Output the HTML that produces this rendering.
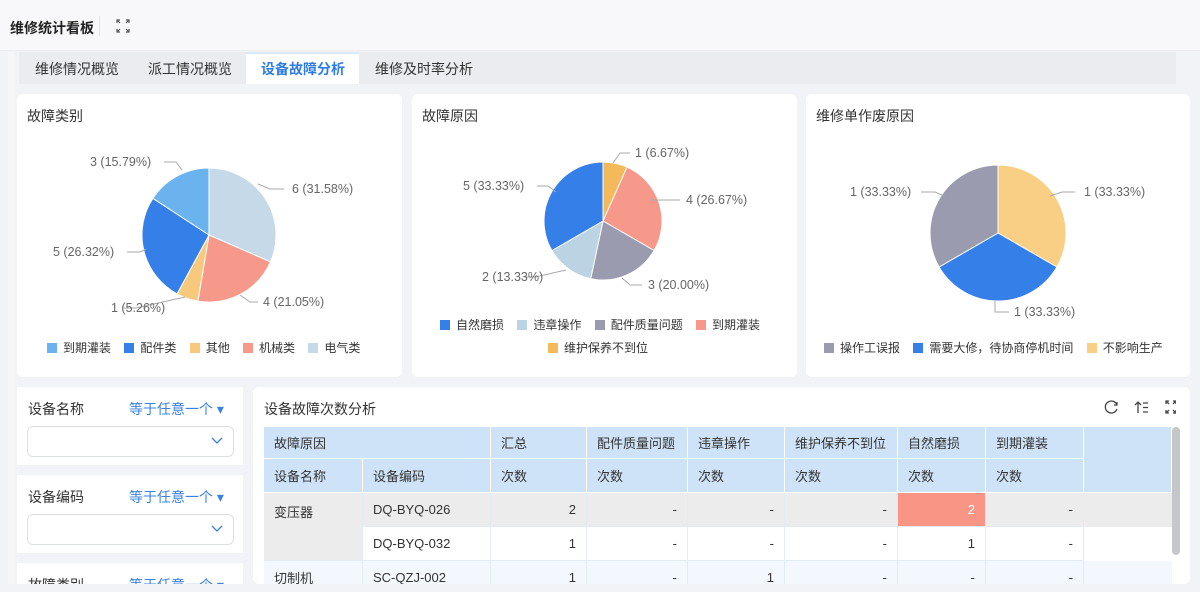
<!DOCTYPE html>
<html style="width:1200px;height:592px;overflow:hidden"><head><meta charset="utf-8"><style>
*{margin:0;padding:0;box-sizing:border-box}
body{width:1200px;height:592px;overflow:hidden;background:#f2f3f7;font-family:"Liberation Sans","Noto Sans CJK SC",sans-serif;color:#333;position:relative}
.a{position:absolute}
.card{position:absolute;background:#fff;border-radius:6px}
.t{font-size:14px;color:#333}
.lg{font-size:12px;color:#333;white-space:nowrap}
.sq{display:inline-block;width:10px;height:10px;vertical-align:-1px;margin-right:6px}
.c{position:absolute;font-size:13px;color:#333;padding:0 10px;display:flex;align-items:center;border-right:1px solid #e3ebf5;border-bottom:1px solid #e3ebf5}
.h{background:#cfe3f8;border-right:1px solid #fff;border-bottom:1px solid #fff}
.r{justify-content:flex-end}
</style></head><body>
<div class="a" style="left:0;top:0;width:1200px;height:51px;background:#f8f8fb;border-bottom:1px solid #eceef2"></div>
<div class="a" style="left:10px;top:18px;font-size:14px;font-weight:bold;color:#222">维修统计看板</div>
<div class="a" style="left:99px;top:16px;width:1px;height:20px;background:#e2e2e6"></div>
<svg class="a" style="left:116px;top:19px" width="14" height="14" viewBox="0 0 14 14" fill="none" stroke="#555" stroke-width="1.2"><path d="M1 4V1h3M1 1l3 3M10 1h3v3M13 1l-3 3M1 10v3h3M1 13l3-3M13 10v3h-3M13 13l-3-3"/></svg>
<div class="a" style="left:8px;top:52px;width:6px;height:540px;background:#f7f7fa"></div>
<div class="a" style="left:19px;top:52px;width:1157px;height:32px;background:#eaecf0"></div>
<div class="a" style="left:246px;top:52px;width:113px;height:32px;background:#fff;border-top:2px solid #dbe8f8"></div>
<div class="a" style="left:35px;top:59px;font-size:14px;color:#333">维修情况概览</div>
<div class="a" style="left:148px;top:59px;font-size:14px;color:#333">派工情况概览</div>
<div class="a" style="left:261px;top:59px;font-size:14px;color:#2f7de1;font-weight:bold">设备故障分析</div>
<div class="a" style="left:375px;top:59px;font-size:14px;color:#333">维修及时率分析</div>

<div class="card" style="left:17px;top:94px;width:385px;height:283px"></div>
<div class="card" style="left:412px;top:94px;width:385px;height:283px"></div>
<div class="card" style="left:806px;top:94px;width:384px;height:283px"></div>
<div class="a t" style="left:27px;top:106px">故障类别</div>
<div class="a t" style="left:422px;top:106px">故障原因</div>
<div class="a t" style="left:816px;top:106px">维修单作废原因</div>

<svg class="a" style="left:0;top:0" width="1200" height="380" font-family="Liberation Sans" font-size="12.5" fill="#666">
<g stroke="#fff" stroke-width="1">
<path d="M209 235L209 168A67 67 0 0 1 270.4 261.9Z" fill="#c6d9e8"/>
<path d="M209 235L270.4 261.9A67 67 0 0 1 197.9 301.1Z" fill="#f7998a"/>
<path d="M209 235L197.9 301.1A67 67 0 0 1 177.1 293.9Z" fill="#f8c87d"/>
<path d="M209 235L177.1 293.9A67 67 0 0 1 152.9 198.3Z" fill="#3580e8"/>
<path d="M209 235L152.9 198.3A67 67 0 0 1 209 168Z" fill="#6bb3ef"/>
<path d="M603 221L603 162A59 59 0 0 1 627 167.1Z" fill="#f3b95a"/>
<path d="M603 221L627 167.1A59 59 0 0 1 654.1 250.5Z" fill="#f7998a"/>
<path d="M603 221L654.1 250.5A59 59 0 0 1 590.7 278.7Z" fill="#9b9bb0"/>
<path d="M603 221L590.7 278.7A59 59 0 0 1 551.9 250.5Z" fill="#bcd3e4"/>
<path d="M603 221L551.9 250.5A59 59 0 0 1 603 162Z" fill="#3580e8"/>
<path d="M998 233L998 165A68 68 0 0 1 1056.9 267Z" fill="#f8cf84"/>
<path d="M998 233L1056.9 267A68 68 0 0 1 939.1 267Z" fill="#3580e8"/>
<path d="M998 233L939.1 267A68 68 0 0 1 998 165Z" fill="#9b9bb0"/>
</g>
<g stroke="#aaa" fill="none" stroke-width="1">
<path d="M164 162L176 162L182 170"/><path d="M258 184L270 189L284 189"/><path d="M127 252L140 252L146 249"/><path d="M123 308L136 308L185 297"/><path d="M240 295L250 302L258 302"/>
<path d="M537 186L548 186L556 192"/><path d="M613 163L620 153L630 153"/><path d="M650 200L665 200L680 200"/><path d="M524 277L535 277L566 270"/><path d="M622 278L630 285L642 285"/>
<path d="M921 192L935 192L944 196"/><path d="M1050 196L1062 192L1075 192"/><path d="M995 301L995 312L1009 312"/>
</g>
<text x="90" y="166">3 (15.79%)</text><text x="292" y="193">6 (31.58%)</text>
<text x="53" y="256">5 (26.32%)</text><text x="111" y="312">1 (5.26%)</text><text x="263" y="306">4 (21.05%)</text>
<text x="463" y="190">5 (33.33%)</text><text x="635" y="157">1 (6.67%)</text><text x="686" y="204">4 (26.67%)</text>
<text x="482" y="281">2 (13.33%)</text><text x="648" y="289">3 (20.00%)</text>
<text x="850" y="196">1 (33.33%)</text><text x="1084" y="196">1 (33.33%)</text><text x="1014" y="316">1 (33.33%)</text>
</svg>

<div class="a lg" style="left:47px;top:339px"><span class="sq" style="background:#6bb3ef"></span>到期灌装 &nbsp;&nbsp; <span class="sq" style="background:#3580e8"></span>配件类 &nbsp;&nbsp; <span class="sq" style="background:#f8c87d"></span>其他 &nbsp;&nbsp; <span class="sq" style="background:#f7998a"></span>机械类 &nbsp;&nbsp; <span class="sq" style="background:#c6d9e8"></span>电气类</div>
<div class="a lg" style="left:440px;top:316px"><span class="sq" style="background:#3580e8"></span>自然磨损 &nbsp;&nbsp; <span class="sq" style="background:#bcd3e4"></span>违章操作 &nbsp;&nbsp; <span class="sq" style="background:#9b9bb0"></span>配件质量问题 &nbsp;&nbsp; <span class="sq" style="background:#f7998a"></span>到期灌装</div>
<div class="a lg" style="left:548px;top:339px"><span class="sq" style="background:#f3b95a"></span>维护保养不到位</div>
<div class="a lg" style="left:824px;top:339px"><span class="sq" style="background:#9b9bb0"></span>操作工误报 &nbsp;&nbsp; <span class="sq" style="background:#3580e8"></span>需要大修，待协商停机时间 &nbsp;&nbsp; <span class="sq" style="background:#f8cf84"></span>不影响生产</div>

<div class="a" style="left:17px;top:387px;width:226px;height:78px;background:#fff"></div>
<div class="a" style="left:17px;top:475px;width:226px;height:78px;background:#fff"></div>
<div class="a" style="left:17px;top:563px;width:226px;height:22px;background:#fff"></div>
<div class="a t" style="left:28px;top:399px">设备名称</div><div class="a t" style="left:129px;top:399px;color:#3a82e0">等于任意一个 ▾</div>
<div class="a" style="left:27px;top:426px;width:207px;height:31px;border:1px solid #dcdfe6;border-radius:6px"></div>
<svg class="a" style="left:211px;top:437px" width="12" height="8"><path d="M1 1l5 5 5-5" fill="none" stroke="#3a82e0" stroke-width="1.3"/></svg>
<div class="a t" style="left:28px;top:487px">设备编码</div><div class="a t" style="left:129px;top:487px;color:#3a82e0">等于任意一个 ▾</div>
<div class="a" style="left:27px;top:514px;width:207px;height:31px;border:1px solid #dcdfe6;border-radius:6px"></div>
<svg class="a" style="left:211px;top:525px" width="12" height="8"><path d="M1 1l5 5 5-5" fill="none" stroke="#3a82e0" stroke-width="1.3"/></svg>
<div class="a" style="left:17px;top:563px;width:226px;height:21px;overflow:hidden">
<div class="a t" style="left:11px;top:12px">故障类别</div><div class="a t" style="left:112px;top:12px;color:#3a82e0">等于任意一个 ▾</div>
</div>

<div class="card" style="left:253px;top:387px;width:937px;height:197px"></div>
<div class="a t" style="left:264px;top:399px">设备故障次数分析</div>
<svg class="a" style="left:1104px;top:399px" width="72" height="16" fill="none" stroke="#444" stroke-width="1.3">
<path d="M13 6A6 6 0 1 0 13 10M13 3v3h-3"/>
<path d="M34 14V3M31 6l3-3 3 3M39 4h5M39 8.5h5M39 13h5"/>
<path d="M62 5V2h3M62 2l3 3M69 2h3v3M72 2l-3 3M62 11v3h3M62 14l3-3M72 11v3h-3M72 14l-3-3"/>
</svg>
<div class="a" style="left:264px;top:427px;width:908px;height:157px;overflow:hidden">
<div class="c h" style="left:0;top:0;width:227px;height:32px">故障原因</div>
<div class="c h" style="left:227px;top:0;width:96px;height:32px">汇总</div>
<div class="c h" style="left:323px;top:0;width:101px;height:32px">配件质量问题</div>
<div class="c h" style="left:424px;top:0;width:97px;height:32px">违章操作</div>
<div class="c h" style="left:521px;top:0;width:113px;height:32px">维护保养不到位</div>
<div class="c h" style="left:634px;top:0;width:88px;height:32px">自然磨损</div>
<div class="c h" style="left:722px;top:0;width:98px;height:32px">到期灌装</div>
<div class="c h" style="left:820px;top:0;width:88px;height:66px"></div>
<div class="c h" style="left:0;top:32px;width:99px;height:34px">设备名称</div>
<div class="c h" style="left:99px;top:32px;width:128px;height:34px">设备编码</div>
<div class="c h" style="left:227px;top:32px;width:96px;height:34px">次数</div>
<div class="c h" style="left:323px;top:32px;width:101px;height:34px">次数</div>
<div class="c h" style="left:424px;top:32px;width:97px;height:34px">次数</div>
<div class="c h" style="left:521px;top:32px;width:113px;height:34px">次数</div>
<div class="c h" style="left:634px;top:32px;width:88px;height:34px">次数</div>
<div class="c h" style="left:722px;top:32px;width:98px;height:34px">次数</div>
<div class="c" style="left:0;top:66px;width:99px;height:68px;background:#ececed;align-items:flex-start;padding-top:9px">变压器</div>
<div class="a" style="left:99px;top:66px;width:809px;height:34px;background:#ececed"></div>
<div class="c" style="left:99px;top:66px;width:128px;height:34px">DQ-BYQ-026</div>
<div class="c r" style="left:227px;top:66px;width:96px;height:34px">2</div>
<div class="c r" style="left:323px;top:66px;width:101px;height:34px">-</div>
<div class="c r" style="left:424px;top:66px;width:97px;height:34px">-</div>
<div class="c r" style="left:521px;top:66px;width:113px;height:34px">-</div>
<div class="c r" style="left:634px;top:66px;width:88px;height:34px;background:#f89585;color:#fff">2</div>
<div class="c r" style="left:722px;top:66px;width:98px;height:34px">-</div>
<div class="a" style="left:99px;top:100px;width:809px;height:34px;background:#fff"></div>
<div class="c" style="left:99px;top:100px;width:128px;height:34px">DQ-BYQ-032</div>
<div class="c r" style="left:227px;top:100px;width:96px;height:34px">1</div>
<div class="c r" style="left:323px;top:100px;width:101px;height:34px">-</div>
<div class="c r" style="left:424px;top:100px;width:97px;height:34px">-</div>
<div class="c r" style="left:521px;top:100px;width:113px;height:34px">-</div>
<div class="c r" style="left:634px;top:100px;width:88px;height:34px">1</div>
<div class="c r" style="left:722px;top:100px;width:98px;height:34px">-</div>
<div class="a" style="left:0;top:134px;width:908px;height:34px;background:#f3f8fe"></div>
<div class="c" style="left:0;top:134px;width:99px;height:34px">切制机</div>
<div class="c" style="left:99px;top:134px;width:128px;height:34px">SC-QZJ-002</div>
<div class="c r" style="left:227px;top:134px;width:96px;height:34px">1</div>
<div class="c r" style="left:323px;top:134px;width:101px;height:34px">-</div>
<div class="c r" style="left:424px;top:134px;width:97px;height:34px">1</div>
<div class="c r" style="left:521px;top:134px;width:113px;height:34px">-</div>
<div class="c r" style="left:634px;top:134px;width:88px;height:34px">-</div>
<div class="c r" style="left:722px;top:134px;width:98px;height:34px">-</div>
</div>
<div class="a" style="left:1172px;top:427px;width:8px;height:128px;background:#c5c7cb;border-radius:4px"></div>
<div class="a" style="left:0;top:584px;width:1200px;height:8px;background:#f2f3f7"></div>
</body></html>
